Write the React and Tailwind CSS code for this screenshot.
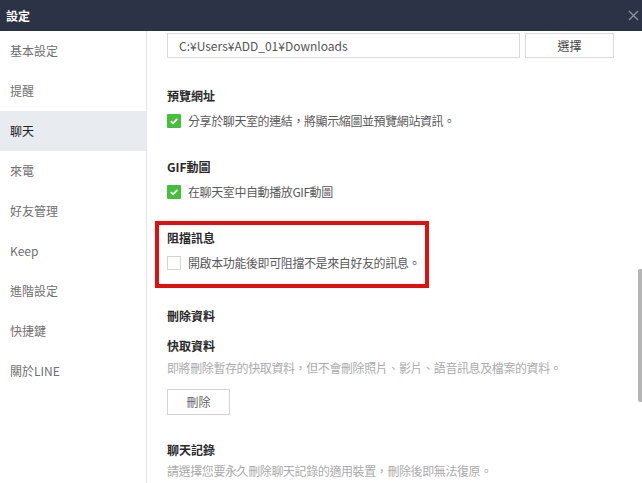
import React from 'react';

const menuItems = ['基本設定', '提醒', '聊天', '來電', '好友管理', 'Keep', '進階設定', '快捷鍵', '關於LINE'];

const CheckBox = ({ checked }) =>
  checked ? (
    <span className="flex h-[14px] w-[14px] shrink-0 items-center justify-center rounded-[1px] bg-[#45bf3c]">
      <svg width="10" height="10" viewBox="0 0 10 10">
        <path d="M1.8 5.2 L4 7.3 L8.3 2.8" fill="none" stroke="#fff" strokeWidth="1.8" />
      </svg>
    </span>
  ) : (
    <span className="h-[14px] w-[14px] shrink-0 border border-[#d4d4d4] bg-white" />
  );

const Heading = ({ children, className = '' }) => (
  <div className={`h-[20px] leading-[20px] text-[12px] font-bold text-[#2a2a2a] ${className}`}>{children}</div>
);

const OptionRow = ({ checked, label, className = '' }) => (
  <div className={`flex h-[20px] items-center gap-[7px] whitespace-nowrap ${className}`}>
    <CheckBox checked={checked} />
    <span className="text-[12px] tracking-[-0.4px] text-[#5a5a5a]">{label}</span>
  </div>
);

const App = () => {
  const active = '聊天';

  return (
    <div
      className="flex h-[483px] w-[642px] flex-col overflow-hidden bg-white"
      style={{ fontFamily: '"Noto Sans CJK TC", "Noto Sans", sans-serif' }}
    >
      {/* title bar */}
      <div className="flex h-[31px] shrink-0 items-center justify-between bg-[#2c3346] pl-[6px] pr-[3px]">
        <span className="text-[12px] font-bold text-white">設定</span>
        <svg width="11" height="11" viewBox="0 0 11 11">
          <path d="M1 1 L10 10 M10 1 L1 10" stroke="#8d929e" strokeWidth="1.4" />
        </svg>
      </div>

      <div className="relative flex flex-1 overflow-hidden">
        {/* sidebar */}
        <div className="w-[147px] shrink-0 border-r border-[#e6e6e6]">
          {menuItems.map(item => (
            <div
              key={item}
              className={`flex h-[40px] items-center pl-[10px] text-[12px] ${
                item === active ? 'bg-[#e8ebf0] text-[#222]' : 'text-[#707070]'
              }`}
            >
              {item}
            </div>
          ))}
        </div>

        {/* content */}
        <div className="flex-1 whitespace-nowrap pl-[20px] pt-[2px]">
          <div className="flex gap-[5px]">
            <div className="flex h-[25px] w-[353px] items-center border border-[#dadada] pl-[11px] text-[12px] text-[#555]">
              C:¥Users¥ADD_01¥Downloads
            </div>
            <div className="flex h-[25px] w-[89px] items-center justify-center border border-[#dadada] text-[12px] text-[#444]">
              選擇
            </div>
          </div>

          <Heading className="mt-[28px]">預覽網址</Heading>
          <OptionRow checked className="mt-[5px]" label="分享於聊天室的連結，將顯示縮圖並預覽網站資訊。" />

          <Heading className="mt-[26px]">GIF動圖</Heading>
          <OptionRow checked className="mt-[5px]" label="在聊天室中自動播放GIF動圖" />

          <div className="ml-[-12px] mt-[19px] w-[274px] border-4 border-[#e30f0f] pb-[11px] pl-[8px] pt-[3px]">
            <Heading>阻擋訊息</Heading>
            <OptionRow className="mt-[5px]" label="開啟本功能後即可阻擋不是來自好友的訊息。" />
          </div>

          <Heading className="mt-[18px]">刪除資料</Heading>

          <Heading className="mt-[10px]">快取資料</Heading>
          <div className="mt-[2px] h-[20px] text-[12px] leading-[20px] tracking-[-0.4px] text-[#ababab]">
            即將刪除暫存的快取資料，但不會刪除照片、影片、語音訊息及檔案的資料。
          </div>
          <div className="mt-[11px] flex h-[26px] w-[63px] items-center justify-center border border-[#d4d4d4] text-[12px] text-[#666]">
            刪除
          </div>

          <Heading className="mt-[25px]">聊天記錄</Heading>
          <div className="mt-[1px] h-[20px] text-[12px] leading-[20px] tracking-[-0.4px] text-[#ababab]">
            請選擇您要永久刪除聊天記錄的適用裝置，刪除後即無法復原。
          </div>
        </div>

        {/* scrollbar thumb */}
        <div className="absolute right-0 top-[238px] h-[133px] w-[4px] rounded-l-[2px] bg-[#b5b5b5]" />
      </div>
    </div>
  );
};

export default App;
